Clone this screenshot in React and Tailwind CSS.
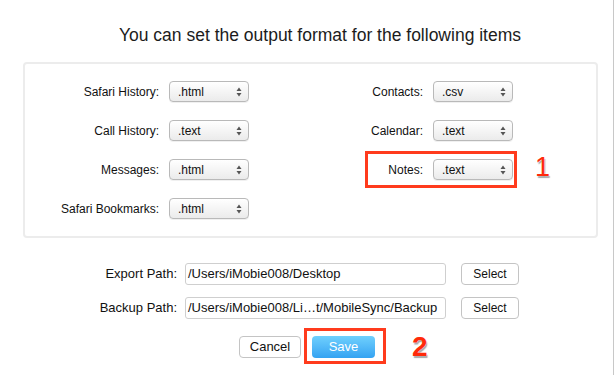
import React from 'react';

const font = { fontFamily: '"Liberation Sans", Arial, sans-serif' };

function Arrows() {
  return (
    <svg width="6" height="10" viewBox="0 0 6 10" className="shrink-0">
      <path d="M3 0.5 L5.5 4 L0.5 4 Z" fill="#555" />
      <path d="M3 9.5 L5.5 6 L0.5 6 Z" fill="#555" />
    </svg>
  );
}

function FormatSelect({ value }) {
  return (
    <div className="w-[80px] h-[21px] flex items-center justify-between pl-[8px] pr-[6px] rounded-[4px] border border-[#b9b9b9] bg-gradient-to-b from-white to-[#ebebeb] shadow-[0_1px_0_rgba(0,0,0,0.06)] text-[12px] text-[#111]">
      <span>{value}</span>
      <Arrows />
    </div>
  );
}

function Label({ children }) {
  return <div className="text-right text-[12px] text-[#111]">{children}</div>;
}

function PathRow({ label, path }) {
  return (
    <div className="flex items-center h-[22px]">
      <div className="w-[177px] text-right text-[13px] text-[#111]">{label}</div>
      <div className="ml-[8px] w-[261px] h-[22px] flex items-center pl-[2px] rounded-[3px] border border-[#cfcfcf] text-[13px] text-[#111] overflow-hidden whitespace-nowrap">
        {path}
      </div>
      <div className="ml-[15px] w-[58px] h-[22px] flex items-center justify-center rounded-[4px] border border-[#c4c4c4] bg-white text-[12px] text-[#111]">
        Select
      </div>
    </div>
  );
}

export default function App() {
  const left = [
    ['Safari History:', '.html'],
    ['Call History:', '.text'],
    ['Messages:', '.html'],
    ['Safari Bookmarks:', '.html'],
  ];
  const right = [
    ['Contacts:', '.csv'],
    ['Calendar:', '.text'],
    ['Notes:', '.text'],
  ];

  return (
    <div className="relative w-[615px] h-[375px] bg-white overflow-hidden" style={font}>
      <div className="w-[614px] h-full border-r border-[#c8c8c8]">
        {/* Title */}
        <div className="h-[62px] pt-[25px] pl-[27px] text-center text-[17.5px] leading-[20px] text-[#1c1c1c]">
          You can set the output format for the following items
        </div>

        {/* Formats panel */}
        <div className="ml-[23px] w-[575px] h-[176px] rounded-[4px] border-2 border-[#ececec]">
          <div className="grid grid-cols-[134px_80px_164px_80px] auto-rows-[21px] gap-x-[10px] gap-y-[18px] items-center pt-[17px]">
            {left.map(([l, v], i) => (
              <React.Fragment key={l}>
                <div style={{ gridRow: i + 1, gridColumn: 1 }}><Label>{l}</Label></div>
                <div style={{ gridRow: i + 1, gridColumn: 2 }}><FormatSelect value={v} /></div>
              </React.Fragment>
            ))}
            {right.map(([l, v], i) => (
              <React.Fragment key={l}>
                <div style={{ gridRow: i + 1, gridColumn: 3 }}><Label>{l}</Label></div>
                <div style={{ gridRow: i + 1, gridColumn: 4 }}><FormatSelect value={v} /></div>
              </React.Fragment>
            ))}
          </div>
        </div>

        {/* Paths */}
        <div className="mt-[25px] flex flex-col gap-[12px]">
          <PathRow label="Export Path:" path="/Users/iMobie008/Desktop" />
          <PathRow label="Backup Path:" path="/Users/iMobie008/Li…t/MobileSync/Backup" />
        </div>

        {/* Buttons */}
        <div className="mt-[17px] pl-[239px] flex items-center gap-[11px]">
          <div className="w-[62px] h-[22px] flex items-center justify-center rounded-[4px] border border-[#c4c4c4] bg-white text-[13px] text-[#111]">
            Cancel
          </div>
          <div className="w-[63px] h-[22px] flex items-center justify-center rounded-[4px] bg-gradient-to-b from-[#6fd0fd] to-[#34a3f2] text-[13px] text-white">
            Save
          </div>
        </div>
      </div>

      {/* Annotations */}
      <div className="absolute left-[365px] top-[151px] w-[152px] h-[37px] border-[3px] border-[#ff3b1d]" />
      <div className="absolute left-[535px] top-[151px] text-[27px] leading-[32px] text-[#ff2a0a] [text-shadow:0_0_1px_#fff,1px_2px_1px_rgba(0,0,0,0.35)]">
        1
      </div>
      <div className="absolute left-[304px] top-[328px] w-[82px] h-[36px] border-[3px] border-[#ff3b1d]" />
      <div className="absolute left-[412px] top-[331px] text-[28px] font-bold leading-[32px] text-[#ff2a0a] [text-shadow:0_0_1px_#fff,1px_2px_1px_rgba(0,0,0,0.35)]">
        2
      </div>
    </div>
  );
}
